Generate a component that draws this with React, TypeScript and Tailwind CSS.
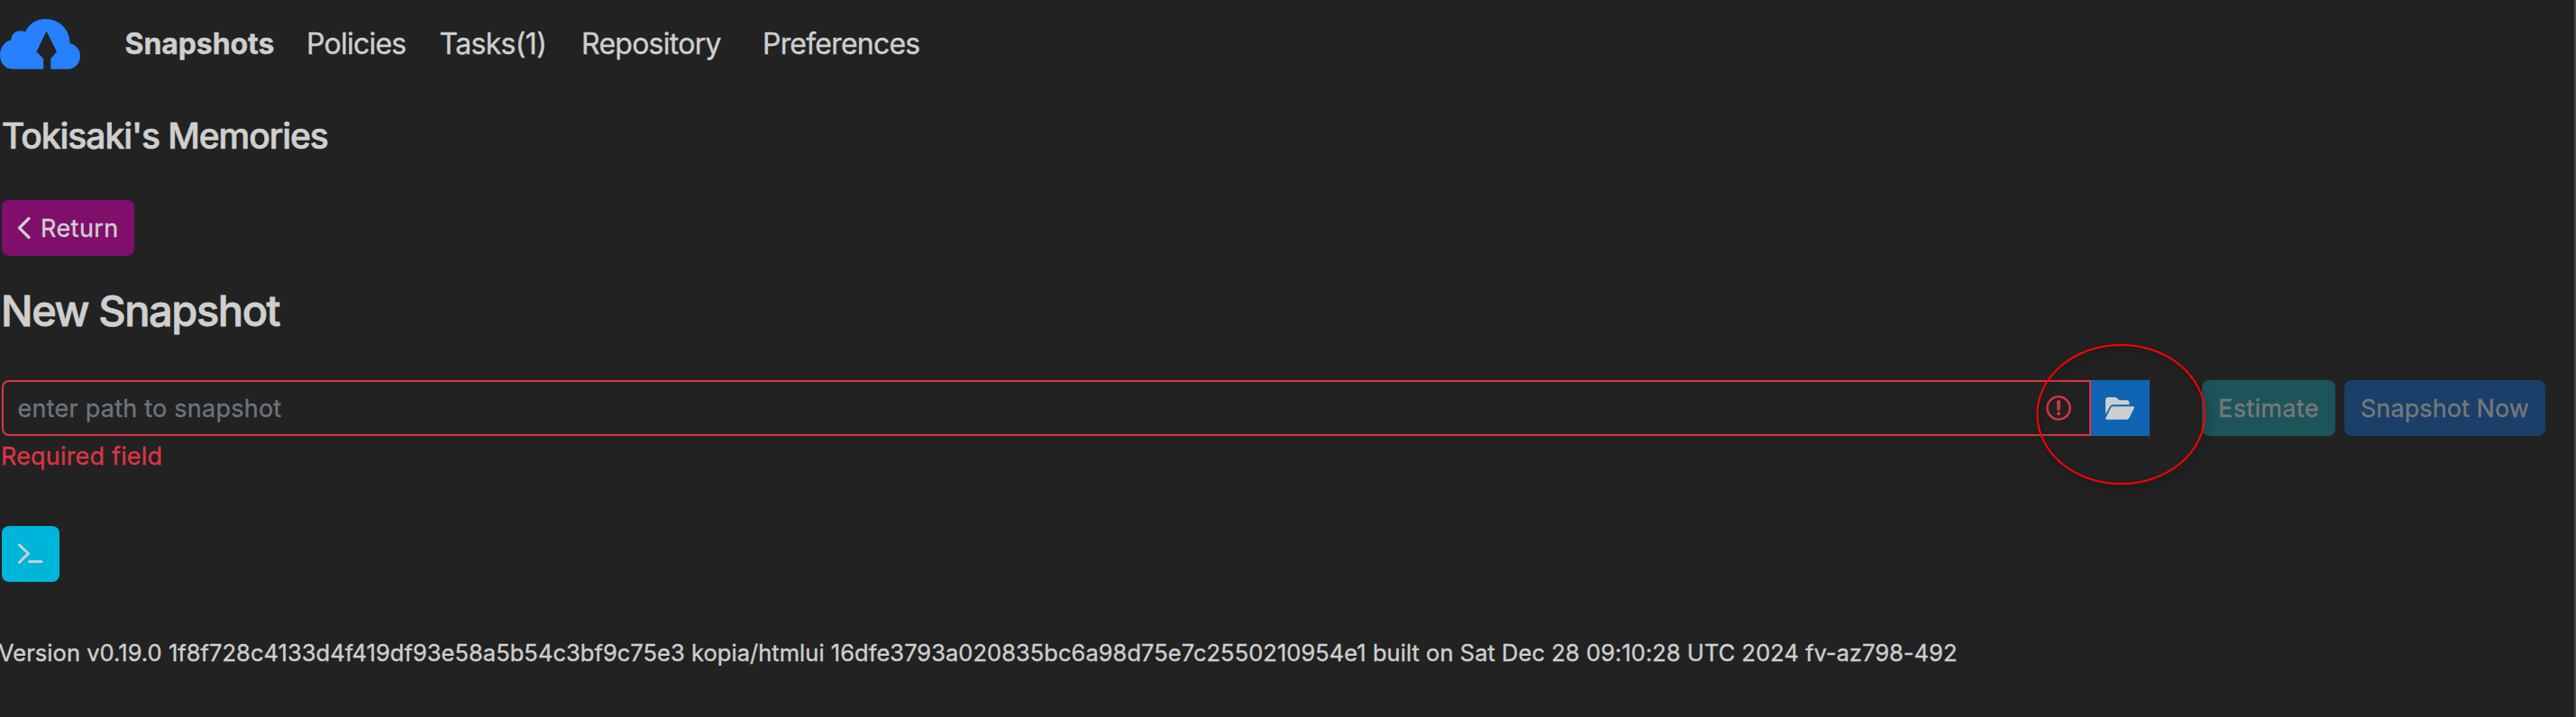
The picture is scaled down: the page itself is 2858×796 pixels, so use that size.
import React from "react";

const navItems = [
  { label: "Snapshots", cls: "w-[201.5px] font-bold tracking-[-0.07px]" },
  { label: "Policies", cls: "w-[147.5px] tracking-[-0.76px]" },
  { label: "Tasks(1)", cls: "w-[157.5px] tracking-[-0.66px]" },
  { label: "Repository", cls: "w-[201px] tracking-[-0.74px]" },
  { label: "Preferences", cls: "tracking-[-0.79px]" },
];

function Logo() {
  return (
    <svg className="h-14 w-[90px]" viewBox="0 0 90 56">
      <path
        fill="#2680ff"
        d="M14 55.7C5.5 55.7 0 48.5 0 40.5C0 32 5 25 12.3 23.6C12.3 17.5 16.5 13.2 22.5 13.2C24.6 13.2 26.4 13.6 28 14.4C32 5.5 40.5 0 50.5 0C65.5 0 77.5 11.5 77.5 27C84 28.5 89 34 89 41C89 49.5 83 55.7 75.5 55.7H56.3V44L63 36.5L51.5 13.5L40.5 36.5L48.2 44V55.7Z"
      />
    </svg>
  );
}

function ChevronLeft() {
  return (
    <svg className="h-7 w-4" viewBox="0 0 16 28" fill="none" stroke="#cfcfcf" strokeWidth="3.2" strokeLinecap="round" strokeLinejoin="round">
      <path d="M13 3.5L2.5 14L13 24.5" />
    </svg>
  );
}

function FolderOpen() {
  return (
    <svg className="h-[25px] w-8" viewBox="0 0 96 75" fill="#cfcfcf">
      <path d="M0 57V10Q0 0 10 0H29Q35 0 39 4L44 8Q47 10 51 10H70Q79 10 79 19V25H25Q18 25 15 31Z" />
      <path d="M25 31H91Q98 31 95 37L79 69Q76 74 70 74H4Q-1 74 1 69L17 36Q20 31 25 31Z" />
    </svg>
  );
}

function AlertCircle() {
  return (
    <svg className="h-7 w-7" viewBox="0 0 28 28">
      <circle cx="14" cy="14" r="12.6" fill="none" stroke="#dc3545" strokeWidth="2.4" />
      <path d="M12 6.4Q12 5.6 12.8 5.6H15.2Q16 5.6 16 6.4L15.6 16Q15.5 17 14 17Q12.5 17 12.4 16Z" fill="#dc3545" />
      <circle cx="14" cy="20.2" r="1.9" fill="#dc3545" />
    </svg>
  );
}

export default function App() {
  return (
    <div className="relative flex h-[796px] w-full flex-col overflow-hidden border-r-2 border-[#4a4a4a] bg-[#222222] font-['Inter',sans-serif] text-[27px] text-[#cfcfcf] [-webkit-text-stroke:0.35px]">
      <nav className="flex h-[97px] shrink-0 items-center text-[32px] leading-[48px]">
        <a className="w-[138.5px] shrink-0">
          <Logo />
        </a>
        {navItems.map((item) => (
          <a key={item.label} className={"shrink-0 pt-px whitespace-nowrap " + item.cls}>
            {item.label}
          </a>
        ))}
      </nav>

      <main className="flex flex-col items-start pl-0.5">
        <h5 className="mt-[30px] text-[39px] leading-[48px] font-medium tracking-[-1.06px] [-webkit-text-stroke:0.7px]">
          Tokisaki's Memories
        </h5>

        <button className="mt-[47px] flex h-[62px] w-[147px] items-center rounded-lg bg-[#800e6b] pl-[17px]">
          <ChevronLeft />
          <span className="ml-2.5 pt-0.5 tracking-[0.45px]">Return</span>
        </button>

        <h4 className="mt-[33px] -ml-px text-[47px] leading-[56px] font-medium tracking-[-1.42px] [-webkit-text-stroke:0.8px]">
          New Snapshot
        </h4>

        <div className="mt-[49px] flex w-full">
          <div className="flex h-[62px] w-[2318px] items-center rounded-l-lg border-2 border-[#dc3545] pr-[20px] pl-[15.5px]">
            <input
              className="h-full min-w-0 flex-1 bg-transparent tracking-[0.24px] outline-none placeholder:text-[#6c757d]"
              placeholder="enter path to snapshot"
            />
            <AlertCircle />
          </div>
          <button className="flex h-[62px] w-[65px] items-center justify-center bg-[#1064b4] pr-0.5">
            <FolderOpen />
          </button>
          <button className="ml-[58px] h-[62px] w-[148px] rounded-lg bg-[#1d545a] pt-0.5 tracking-[0.35px] text-[#787878]">
            Estimate
          </button>
          <button className="ml-2.5 h-[62px] w-[223px] rounded-lg bg-[#1a3f69] pt-0.5 tracking-[0.1px] text-[#787878]">
            Snapshot Now
          </button>
        </div>
        <div className="mt-0.5 -ml-px leading-[42px] tracking-[0.18px] text-[#dc3545]">Required field</div>

        <button className="mt-14 h-[62px] w-16 rounded-lg bg-[#00b5da]">
          <svg className="h-full w-full" viewBox="0 0 64 62" fill="none" stroke="#cfcfcf" strokeWidth="3" strokeLinecap="round" strokeLinejoin="round">
            <path d="M19.5 21L29.5 30.5L19.5 40.3M30.5 39.5H44" />
          </svg>
        </button>
      </main>

      <footer className="-ml-0.5 mt-[60px] text-[25.5px] leading-[38px] tracking-[0.035px] whitespace-nowrap">
        Version v0.19.0 1f8f728c4133d4f419df93e58a5b54c3bf9c75e3 kopia/htmlui 16dfe3793a020835bc6a98d75e7c2550210954e1
        built on Sat Dec 28 09:10:28 UTC 2024 fv-az798-492
      </footer>

      <svg className="pointer-events-none absolute top-[372px] left-[2250px] h-[180px] w-[210px] drop-shadow-[3px_5px_4px_rgba(0,0,0,0.55)]" viewBox="0 0 210 180">
        <ellipse cx="103.2" cy="88" rx="92.9" ry="77.1" fill="none" stroke="#ff0000" strokeWidth="2" />
      </svg>
    </div>
  );
}
